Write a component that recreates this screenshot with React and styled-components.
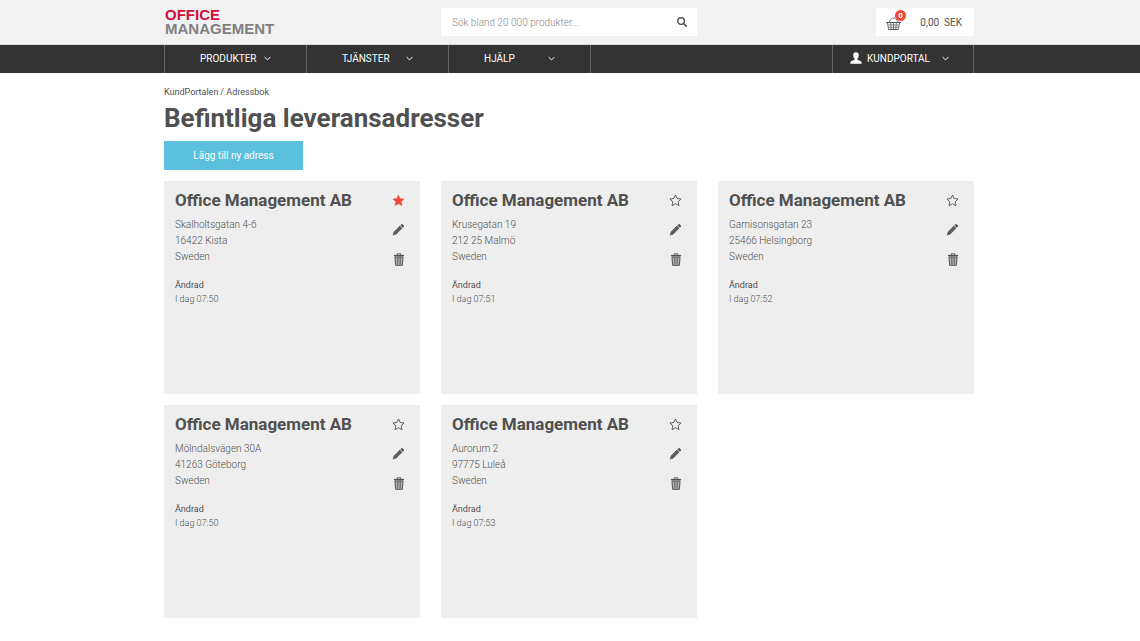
import React from 'react';
import styled, { createGlobalStyle } from 'styled-components';

const GlobalStyle = createGlobalStyle`
  * {
    box-sizing: border-box;
  }
  body {
    margin: 0;
    background: #fff;
    color: #505050;
    font-family: Roboto, 'Liberation Sans', sans-serif;
    font-size: 10px;
  }
  button, input {
    font-family: inherit;
  }
`

const Container = styled.div`
  width: 100%;
  max-width: 812px;
  margin: 0 auto;
  padding-right: 2px;
`
const TopBar = styled.header`
  background: #f2f2f2;
  border-bottom: 1px solid #d8d8d8;
`
const TopGrid = styled(Container)`
  display: grid;
  grid-template-columns: repeat(3, 1fr);
  column-gap: 21px;
  align-items: center;
  height: 44px;
`
const Logo = styled.a`
  padding-left: 1px;
  color: #7f7f7f;
  font: bold 15px/14px 'Liberation Sans', Arial, sans-serif;
  text-decoration: none;
`
const LogoTop = styled.span`
  display: block;
  color: #d0103a;
`
const SearchForm = styled.form`
  display: flex;
  height: 28px;
  background: #fff;
`
const SearchInput = styled.input`
  flex: 1;
  min-width: 0;
  padding: 0 11px;
  border: none;
  outline: none;
  background: none;
  font-size: 10px;
  font-weight: 300;
  &::placeholder {
    color: #888;
    opacity: 1;
  }
`
const IconButton = styled.button`
  display: flex;
  align-items: center;
  justify-content: center;
  width: 14px;
  height: 14px;
  padding: 0;
  border: none;
  background: none;
  color: ${props => props.$active ? '#ee4a36' : '#505050'};
  cursor: pointer;
`
const SearchButton = styled(IconButton)`
  width: 30px;
  height: 28px;
`
const Cart = styled.a`
  display: flex;
  align-items: center;
  justify-content: space-between;
  justify-self: end;
  width: 98px;
  height: 28px;
  padding: 0 12px 0 10px;
  background: #fff;
  color: #505050;
  font-size: 10px;
  text-decoration: none;
  white-space: pre;
`
const Basket = styled.span`
  position: relative;
  display: flex;
  padding-top: 3px;
`
const Badge = styled.span`
  position: absolute;
  top: -4px;
  right: -5px;
  width: 11px;
  height: 11px;
  border-radius: 50%;
  background: #ee4a36;
  color: #fff;
  font-size: 8px;
  font-weight: 700;
  line-height: 11px;
  text-align: center;
`
const NavBar = styled.nav`
  background: #333;
`
const NavList = styled(Container)`
  display: flex;
  height: 28px;
`
const NavItem = styled.button`
  display: flex;
  align-items: center;
  justify-content: space-between;
  width: ${props => props.$end ? 143 : 142}px;
  margin-left: ${props => props.$user ? 'auto' : 0};
  padding: ${props => props.$user ? '0 24px 2px 17px' : '0 35px 2px'};
  border: solid #666;
  border-width: 0 ${props => props.$end || props.$user ? 1 : 0}px 0 1px;
  background: none;
  color: #fff;
  font-size: 10px;
  cursor: pointer;
`
const NavLabel = styled.span`
  display: flex;
  align-items: center;
  gap: 5px;
`
const Crumbs = styled.nav`
  display: flex;
  gap: 2px;
  padding-top: 13px;
  font-size: 9px;
  line-height: 12px;
`
const CrumbLink = styled.a`
  color: #505050;
  text-decoration: none;
`
const Title = styled.h1`
  margin: 4px 0 7px;
  font-size: 26px;
  font-weight: 700;
  line-height: 32px;
`
const AddButton = styled.button`
  display: block;
  width: 139px;
  height: 29px;
  margin-bottom: 11px;
  padding: 0;
  border: none;
  background: #5bc0de;
  color: #fff;
  font-size: 10px;
  cursor: pointer;
`
const CardGrid = styled.main`
  display: grid;
  grid-template-columns: repeat(3, 1fr);
  gap: 11px 21px;
  padding-bottom: 24px;
`
const Card = styled.article`
  display: flex;
  justify-content: space-between;
  min-height: 213px;
  padding: 8px 14px 8px 11px;
  background: #eee;
`
const CardTitle = styled.h2`
  margin: 0 0 6px;
  font-size: 17px;
  font-weight: 700;
  line-height: 22px;
`
const Address = styled.p`
  margin: 0 0 13px;
  font-size: 10px;
  font-weight: 300;
  line-height: 16px;
`
const Changed = styled.p`
  margin: 0;
  font-size: 9px;
  font-weight: 300;
  line-height: 14px;
`
const Actions = styled.div`
  display: flex;
  flex-direction: column;
  gap: 15px;
  padding-top: 5px;
`

const Chevron = () => (
  <svg width="7" height="5" viewBox="0 0 7 5" fill="none" stroke="currentColor" strokeWidth="1">
    <path d="M0.6 1 L3.5 3.9 L6.4 1" />
  </svg>
)

const SearchIcon = () => (
  <svg width="10" height="10" viewBox="0 0 10 10" fill="none" stroke="currentColor">
    <circle cx="4.1" cy="4.1" r="3.3" strokeWidth="1.4" />
    <path d="M6.5 6.5 L9.2 9.2" strokeWidth="1.7" strokeLinecap="round" />
  </svg>
)

const UserIcon = () => (
  <svg width="12" height="12" viewBox="0 0 12 12" fill="currentColor">
    <path d="M6 0.3C4.2 0.3 3.2 1.6 3.2 3.3C3.2 4.7 3.8 6 4.6 6.7V7.8C3.2 8.5 0.6 9 0.4 10.4V11.7H11.6V10.4C11.4 9 8.8 8.5 7.4 7.8V6.7C8.2 6 8.8 4.7 8.8 3.3C8.8 1.6 7.8 0.3 6 0.3Z" />
  </svg>
)

const BasketIcon = () => (
  <svg width="15" height="14" viewBox="0 0 15 14" fill="none" stroke="#505050" strokeWidth="0.7">
    <path d="M0 5.5H15" strokeWidth="1" />
    <path d="M3 5.5C4 3.5 5.2 1.2 6.3 1.2H8.7C9.8 1.2 11 3.5 12 5.5" />
    <path d="M1.3 5.5L2.6 12.5M13.7 5.5L12.4 12.5M1.8 8H13.2M2.2 10.3H12.8M4.7 5.5L5.2 12.5M7.5 5.5V12.5M10.3 5.5L9.8 12.5" />
    <path d="M2.5 12.5H12.5" strokeWidth="1" />
  </svg>
)

const StarIcon = ({ filled }) => (
  <svg width="14" height="14" viewBox="0 0 14 14" fill={filled ? 'currentColor' : 'none'} stroke="currentColor" strokeLinejoin="round">
    <path d="M6.5 1L8.1 4.5L12.1 5L9.2 7.7L10 11.7L6.5 9.7L3 11.7L3.8 7.7L0.9 5L4.9 4.5Z" strokeWidth={filled ? 0.4 : 0.9} />
  </svg>
)

const PencilIcon = () => (
  <svg width="14" height="14" viewBox="0 0 14 14" fill="currentColor">
    <path d="M9.2 1.5Q10 0.8 10.8 1.4L11.7 2.3Q12.4 3.1 11.7 3.9L10.8 4.7L8.4 2.3Z" />
    <path d="M7.8 2.8L10.3 5.3L4.1 11.4L0.8 12.4L1.7 8.9Z" />
    <path d="M3.2 9.2L8.4 4M4.2 10.1L9.3 5" stroke="#999" strokeWidth="0.4" />
    <path d="M1.8 10.6L2.7 11.5" stroke="#eee" strokeWidth="0.5" />
  </svg>
)

const TrashIcon = () => (
  <svg width="12" height="13" viewBox="0 0 12 13" fill="none" stroke="currentColor">
    <path d="M4.2 2V0.8H7.8V2" strokeWidth="0.9" />
    <path d="M1 2.6H11" strokeWidth="1.4" />
    <path d="M2 4L2.6 12.3H9.4L10 4Z" fill="#bbb" strokeWidth="1" />
    <path d="M4.4 4.6V11.6M6 4.6V11.6M7.6 4.6V11.6" strokeWidth="0.7" />
  </svg>
)

const menu = ['PRODUKTER', 'TJÄNSTER', 'HJÄLP']

const addresses = [
  { street: 'Skalholtsgatan 4-6', city: '16422 Kista', time: '07:50', favourite: true },
  { street: 'Krusegatan 19', city: '212 25 Malmö', time: '07:51' },
  { street: 'Garnisonsgatan 23', city: '25466 Helsingborg', time: '07:52' },
  { street: 'Mölndalsvägen 30A', city: '41263 Göteborg', time: '07:50' },
  { street: 'Aurorum 2', city: '97775 Luleå', time: '07:53' },
]

const AddressCard = ({ street, city, time, favourite }) => (
  <Card>
    <div>
      <CardTitle>Office Management AB</CardTitle>
      <Address>
        {street}<br />
        {city}<br />
        Sweden
      </Address>
      <Changed>
        <strong>Ändrad</strong><br />
        I dag {time}
      </Changed>
    </div>
    <Actions>
      <IconButton $active={favourite} aria-label="Favorit"><StarIcon filled={favourite} /></IconButton>
      <IconButton aria-label="Redigera"><PencilIcon /></IconButton>
      <IconButton aria-label="Ta bort"><TrashIcon /></IconButton>
    </Actions>
  </Card>
)

const App = () => {
  return (
    <>
      <GlobalStyle />
      <TopBar>
        <TopGrid>
          <Logo href="#">
            <LogoTop>OFFICE</LogoTop>
            MANAGEMENT
          </Logo>
          <SearchForm onSubmit={(e) => e.preventDefault()}>
            <SearchInput aria-label="Sök" placeholder="Sök bland 20 000 produkter..." />
            <SearchButton aria-label="Sök"><SearchIcon /></SearchButton>
          </SearchForm>
          <Cart href="#">
            <Basket>
              <BasketIcon />
              <Badge>0</Badge>
            </Basket>
            <span>0,00  SEK</span>
          </Cart>
        </TopGrid>
      </TopBar>
      <NavBar>
        <NavList>
          {menu.map((label, i) => (
            <NavItem key={label} $end={i === menu.length - 1}>
              <NavLabel>{label}</NavLabel>
              <Chevron />
            </NavItem>
          ))}
          <NavItem $user>
            <NavLabel><UserIcon />KUNDPORTAL</NavLabel>
            <Chevron />
          </NavItem>
        </NavList>
      </NavBar>
      <Container>
        <Crumbs>
          <CrumbLink href="#">KundPortalen</CrumbLink>
          <span>/ Adressbok</span>
        </Crumbs>
        <Title>Befintliga leveransadresser</Title>
        <AddButton>Lägg till ny adress</AddButton>
        <CardGrid>
          {addresses.map((address) => (
            <AddressCard key={address.street} {...address} />
          ))}
        </CardGrid>
      </Container>
    </>
  );
}

export default App;
